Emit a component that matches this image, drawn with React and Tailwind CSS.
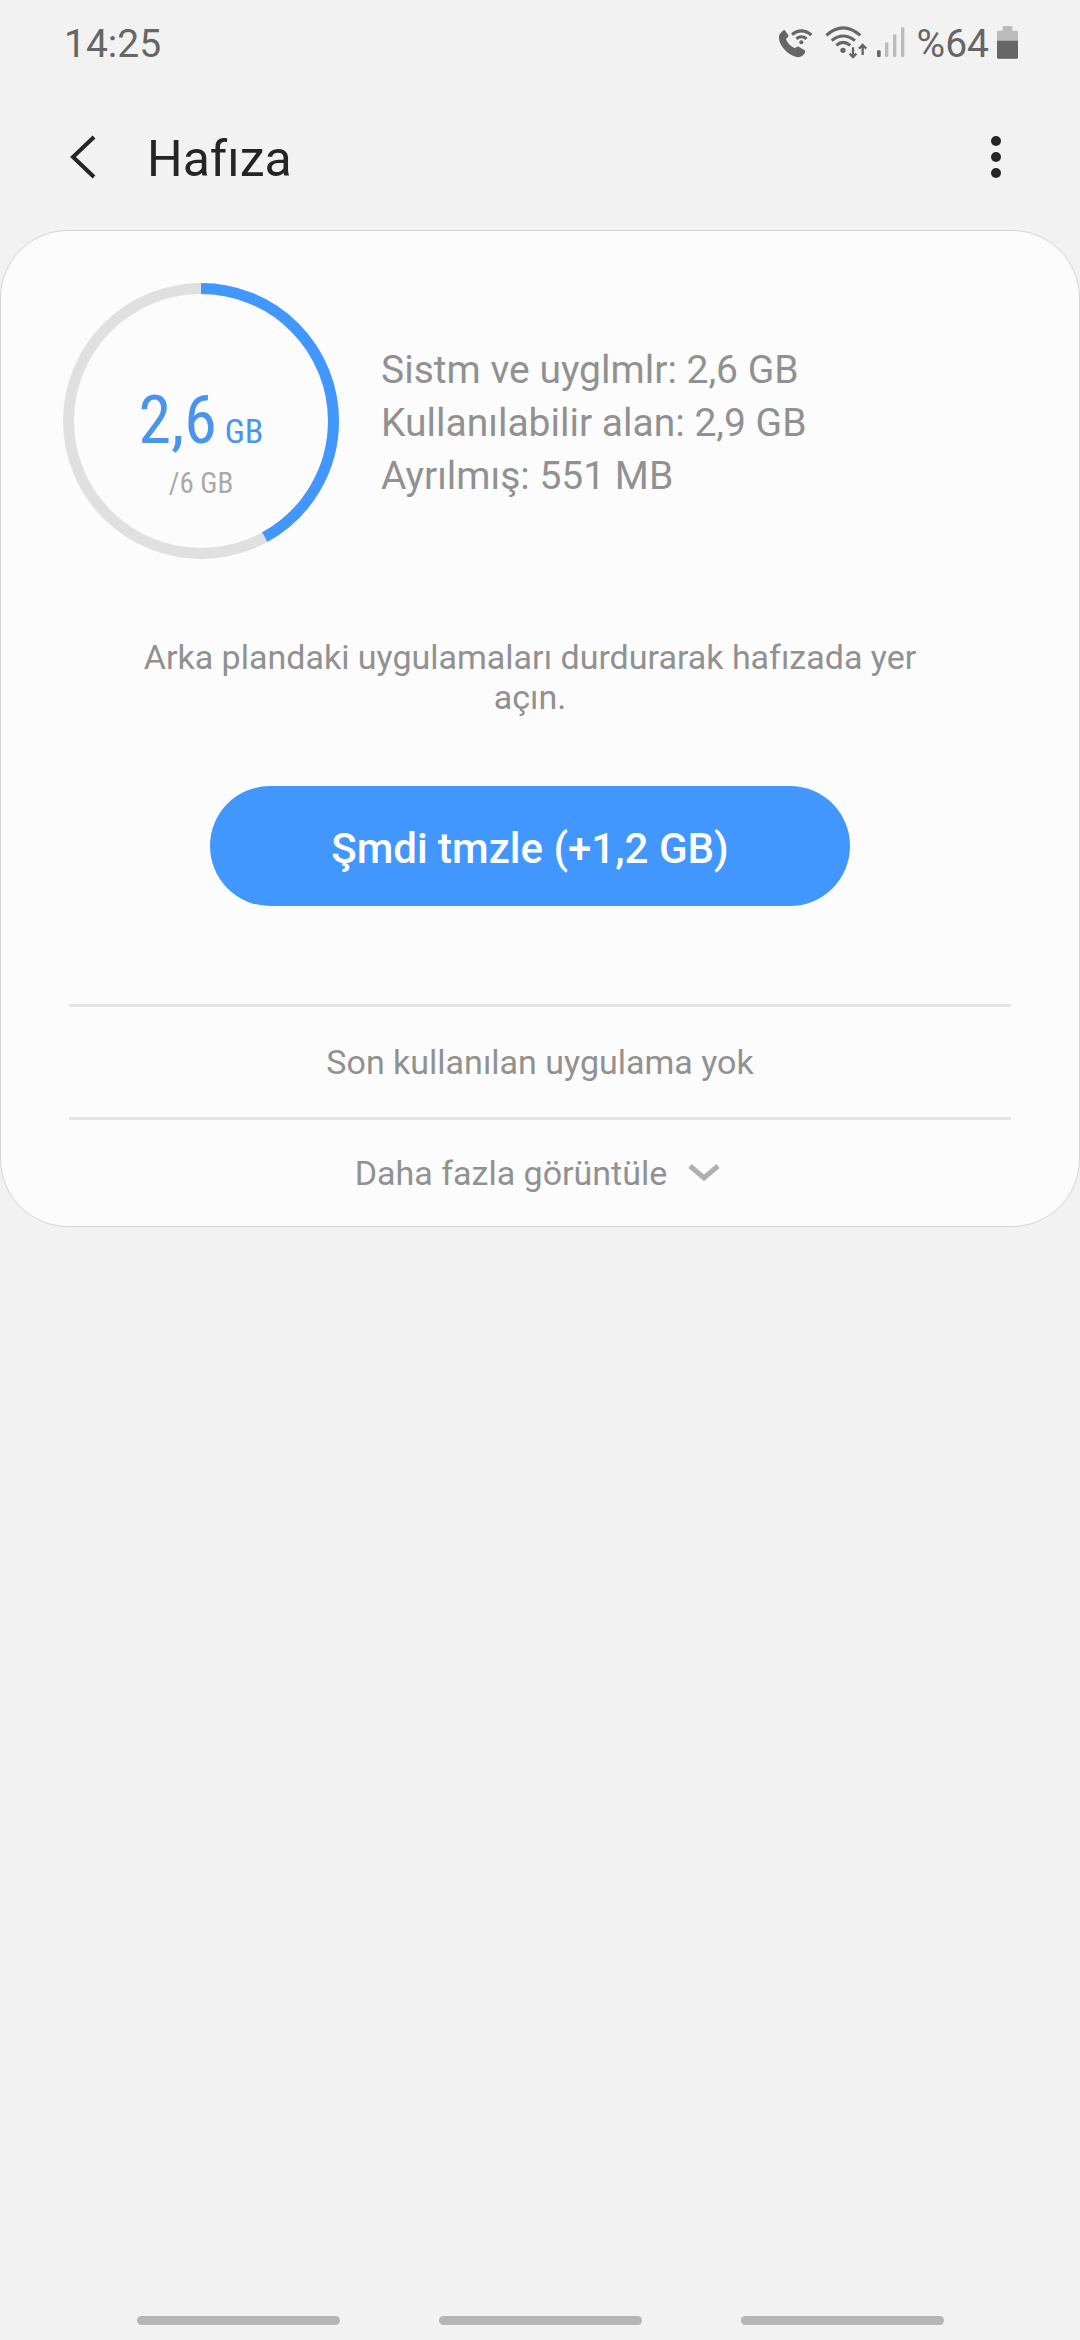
function CallWifiIcon() {
  return (
    <svg width="35" height="33" viewBox="0 0 105 99" fill="none" aria-hidden="true">
      <path
        d="M20 12 L31 28 Q33 32 24 39 Q30 57 50 67 Q57 60 62 62 L80 73 Q84 76 80 82 Q73 94 58 94 Q34 89 16 67 Q1 48 3 31 Q4 23 17 13 Z"
        fill="#666"
      />
      <circle cx="70" cy="49" r="6" fill="#666" />
      <path d="M55 38 Q70 27 86 38 M42 26 Q70 3 100 27" stroke="#666" strokeWidth="9" />
    </svg>
  );
}

function WifiIcon() {
  return (
    <svg width="43" height="34" viewBox="0 0 129 102" fill="none" aria-hidden="true">
      <circle cx="54" cy="76" r="8" fill="#666" />
      <path
        d="M34 61 Q54 43 76 61 M20 47 Q54 19 90 47 M4 31 Q54 -14 106 31"
        stroke="#666"
        strokeWidth="9"
      />
      <path
        d="M84 67 V96 M74 86 L84 96 L94 86 M113 90 V61 M102 71 L113 60 L124 71"
        stroke="#666"
        strokeWidth="7"
      />
    </svg>
  );
}

function SignalIcon() {
  return (
    <svg width="29" height="32" viewBox="0 0 87 96" aria-hidden="true">
      <rect x="3" y="73" width="11" height="20" rx="3" fill="#666" />
      <rect x="27" y="49" width="10" height="44" rx="3" fill="#bbb" />
      <rect x="51" y="25" width="10" height="68" rx="3" fill="#bbb" />
      <rect x="75" y="4" width="10" height="89" rx="3" fill="#bbb" />
    </svg>
  );
}

function BatteryIcon() {
  return (
    <svg width="21" height="33" viewBox="0 0 63 99" aria-hidden="true">
      <rect x="17" y="0" width="29" height="20" rx="4" fill="#bbb" />
      <rect x="0" y="14" width="63" height="84" rx="4" fill="#bbb" />
      <path d="M0 44 H63 V94 Q63 98 59 98 H4 Q0 98 0 94 Z" fill="#666" />
    </svg>
  );
}

function StatusBar() {
  return (
    <div className="flex h-21 items-center justify-between pl-16 pr-[62px] text-[39px] text-[#666]">
      <span className="pt-1">14:25</span>
      <div className="flex items-center">
        <CallWifiIcon />
        <div className="ml-3 flex items-center">
          <WifiIcon />
        </div>
        <div className="ml-2 flex items-center">
          <SignalIcon />
        </div>
        <span className="ml-3 mr-2 pt-1">%64</span>
        <BatteryIcon />
      </div>
    </div>
  );
}

function Header() {
  return (
    <header className="flex h-[146px] items-center px-16 text-[#252525]">
      <button aria-label="Geri" className="flex h-16 w-[83px] items-center">
        <svg width="40" height="44" viewBox="0 0 40 44" fill="none">
          <path d="M30 2 L9 22 L30 42" stroke="#252525" strokeWidth="4" />
        </svg>
      </button>
      <h1 className="flex-1 pt-1 text-[50px]">Hafıza</h1>
      <button aria-label="Diğer seçenekler" className="flex h-16 w-10 items-center justify-center">
        <svg width="12" height="44" viewBox="0 0 12 44" fill="#252525">
          <circle cx="6" cy="6" r="5" />
          <circle cx="6" cy="22" r="5" />
          <circle cx="6" cy="38" r="5" />
        </svg>
      </button>
    </header>
  );
}

function MemoryRing() {
  return (
    <div className="relative h-[276px] w-[276px] shrink-0">
      <svg className="h-full w-full" viewBox="0 0 276 276" fill="none" aria-hidden="true">
        <circle cx="138" cy="138" r="132.5" stroke="#e0e0e0" strokeWidth="11" />
        <circle
          cx="138"
          cy="138"
          r="132.5"
          stroke="#4297ff"
          strokeWidth="11"
          pathLength="100"
          strokeDasharray="42 58"
          transform="rotate(-90 138 138)"
        />
      </svg>
      {/* Used / total */}
      <div className="absolute inset-0 flex flex-col items-center pt-25 font-['Roboto_Condensed','Roboto',sans-serif]">
        <p className="text-[66px] leading-[76px] text-[#4a94ee]">
          2,6<span className="ml-2 text-[34px]">GB</span>
        </p>
        <p className="text-[29px] leading-7 text-[#aaa]">/6 GB</p>
      </div>
    </div>
  );
}

export default function App() {
  return (
    <div className="flex min-h-screen flex-col bg-[#f2f2f2] font-['Roboto',sans-serif] text-[#919191]">
      <StatusBar />
      <Header />

      <main className="rounded-[68px] border border-[#d4d4d4] bg-[#fcfcfc]">
        {/* Usage summary */}
        <section className="flex items-center pl-[62px] pt-[52px]">
          <MemoryRing />
          <ul className="ml-[42px] pt-1 text-[39px] leading-[53px]">
            <li>Sistm ve uyglmlr: 2,6 GB</li>
            <li>Kullanılabilir alan: 2,9 GB</li>
            <li>Ayrılmış: 551 MB</li>
          </ul>
        </section>

        {/* Clean up */}
        <section className="flex flex-col items-center pl-28 pr-33 pt-[78px]">
          <p className="text-center text-[34px] leading-10">
            Arka plandaki uygulamaları durdurarak hafızada yer açın.
          </p>
          <button className="mt-[69px] h-[120px] w-[640px] rounded-full bg-[#4297ff] pt-1 text-[42px] font-medium text-white">
            Şmdi tmzle (+1,2 GB)
          </button>
        </section>

        {/* Recent apps */}
        <section className="mx-17 mt-[98px] text-center text-[34px] leading-10">
          <p className="border-y-3 border-[#e5e5e5] py-[35px]">Son kullanılan uygulama yok</p>
          <button className="flex h-[106px] w-full items-center justify-center pr-1">
            Daha fazla görüntüle
            <svg className="ml-5" width="34" height="20" viewBox="0 0 34 20" fill="none" aria-hidden="true">
              <path d="M3 3 L17 15 L31 3" stroke="#b0b0b0" strokeWidth="5" />
            </svg>
          </button>
        </section>
      </main>

      {/* Gesture hints */}
      <nav className="mt-auto flex justify-center gap-[99px] pb-[15px]">
        <div className="h-[9px] w-[203px] rounded-full bg-[#b5b5b5]" />
        <div className="h-[9px] w-[203px] rounded-full bg-[#b5b5b5]" />
        <div className="h-[9px] w-[203px] rounded-full bg-[#b5b5b5]" />
      </nav>
    </div>
  );
}
